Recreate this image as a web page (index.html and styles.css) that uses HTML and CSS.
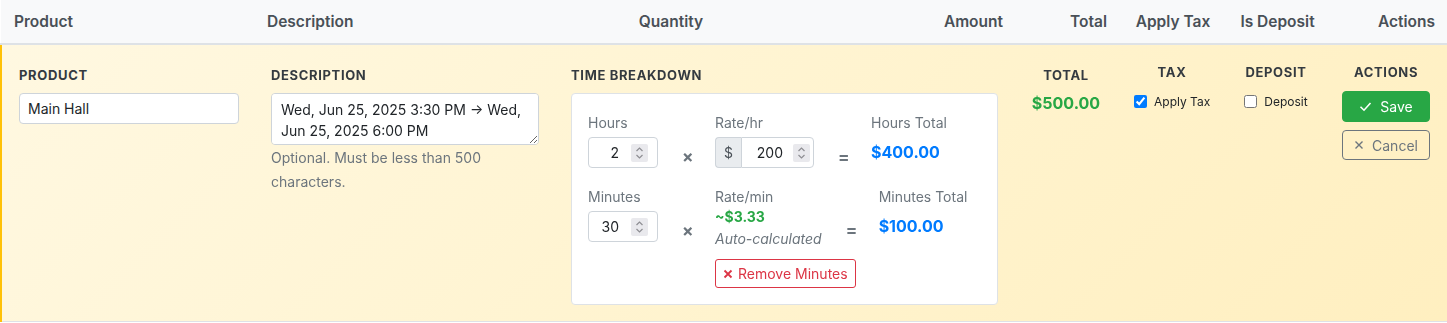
FILE: index.html
```html
<!DOCTYPE html>
<html lang="en">

<head>
    <meta charset="UTF-8">
    <meta name="viewport" content="width=device-width, initial-scale=1.0">
    <title>Line Items</title>
    <link rel="stylesheet" href="styles.css">
</head>

<body>
    <table class="items">
        <colgroup>
            <col class="col-product">
            <col class="col-desc">
            <col class="col-qty">
            <col class="col-amount">
            <col class="col-total">
            <col class="col-tax">
            <col class="col-deposit">
            <col class="col-actions">
        </colgroup>
        <thead>
            <tr>
                <th>Product</th>
                <th>Description</th>
                <th class="center">Quantity</th>
                <th class="right">Amount</th>
                <th class="right">Total</th>
                <th class="center">Apply Tax</th>
                <th class="center">Is Deposit</th>
                <th class="right">Actions</th>
            </tr>
        </thead>
        <tbody>
            <tr class="edit-row">
                <td colspan="8">
                    <div class="edit-grid">
                        <div class="field field-product">
                            <label class="field-label" for="product">Product</label>
                            <input type="text" id="product" class="form-control" value="Main Hall">
                        </div>

                        <div class="field field-desc">
                            <label class="field-label" for="description">Description</label>
                            <textarea id="description" class="form-control" rows="2">Wed, Jun 25, 2025 3:30 PM → Wed, Jun 25, 2025 6:00 PM</textarea>
                            <div class="help-text">Optional. Must be less than 500 characters.</div>
                        </div>

                        <div class="field field-time">
                            <div class="field-label">Time Breakdown</div>
                            <div class="time-card">
                                <div class="calc-row">
                                    <div class="calc-field">
                                        <label class="calc-label" for="hours">Hours</label>
                                        <div class="num-box">
                                            <input type="number" id="hours" value="2">
                                            <span class="spin">
                                                <svg width="17" height="18" viewBox="0 0 17 18"><path d="M5.5 7 8.5 4 11.5 7M5.5 11 8.5 14 11.5 11" fill="none" stroke="#8e8e93" stroke-width="1.2"/></svg>
                                            </span>
                                        </div>
                                    </div>
                                    <div class="op">&times;</div>
                                    <div class="calc-field">
                                        <label class="calc-label" for="rateHr">Rate/hr</label>
                                        <div class="input-group">
                                            <span class="addon">$</span>
                                            <div class="num-box num-box--group">
                                                <input type="number" id="rateHr" value="200">
                                                <span class="spin">
                                                    <svg width="17" height="18" viewBox="0 0 17 18"><path d="M5.5 7 8.5 4 11.5 7M5.5 11 8.5 14 11.5 11" fill="none" stroke="#8e8e93" stroke-width="1.2"/></svg>
                                                </span>
                                            </div>
                                        </div>
                                    </div>
                                    <div class="op">=</div>
                                    <div class="calc-field">
                                        <div class="calc-label">Hours Total</div>
                                        <div class="calc-total">$400.00</div>
                                    </div>
                                </div>

                                <div class="calc-row">
                                    <div class="calc-field">
                                        <label class="calc-label" for="minutes">Minutes</label>
                                        <div class="num-box">
                                            <input type="number" id="minutes" value="30">
                                            <span class="spin">
                                                <svg width="17" height="18" viewBox="0 0 17 18"><path d="M5.5 7 8.5 4 11.5 7M5.5 11 8.5 14 11.5 11" fill="none" stroke="#8e8e93" stroke-width="1.2"/></svg>
                                            </span>
                                        </div>
                                    </div>
                                    <div class="op">&times;</div>
                                    <div class="calc-field">
                                        <div class="calc-label calc-label--flush">Rate/min</div>
                                        <div class="rate-min">~$3.33</div>
                                        <div class="auto-note">Auto-calculated</div>
                                    </div>
                                    <div class="op op--low">=</div>
                                    <div class="calc-field">
                                        <div class="calc-label">Minutes Total</div>
                                        <div class="calc-total">$100.00</div>
                                    </div>
                                </div>

                                <div class="calc-actions">
                                    <button type="button" class="btn-remove">
                                        <svg width="10" height="10" viewBox="0 0 10 10"><path d="M1.5 1.5 8.5 8.5M8.5 1.5 1.5 8.5" stroke="#dc3545" stroke-width="1.8"/></svg>
                                        Remove Minutes
                                    </button>
                                </div>
                            </div>
                        </div>

                        <div class="field field-total">
                            <div class="field-label">Total</div>
                            <div class="line-total">$500.00</div>
                        </div>

                        <div class="field field-tax field--raised">
                            <div class="field-label">Tax</div>
                            <label class="check">
                                <input type="checkbox" checked> Apply Tax
                            </label>
                        </div>

                        <div class="field field-deposit field--raised">
                            <div class="field-label">Deposit</div>
                            <label class="check">
                                <input type="checkbox"> Deposit
                            </label>
                        </div>

                        <div class="field field-actions field--raised">
                            <div class="field-label">Actions</div>
                            <button type="button" class="btn btn-save">
                                <svg width="13" height="13" viewBox="0 0 13 13"><path d="M1.5 6.8 5 10.2 11.5 3" fill="none" stroke="#fff" stroke-width="1.6"/></svg>
                                Save
                            </button>
                            <button type="button" class="btn btn-cancel">
                                <svg width="10" height="10" viewBox="0 0 10 10"><path d="M1.5 1.5 8.5 8.5M8.5 1.5 1.5 8.5" stroke="#6c757d" stroke-width="1.4"/></svg>
                                Cancel
                            </button>
                        </div>
                    </div>
                </td>
            </tr>
        </tbody>
    </table>
</body>

</html>
```

FILE: styles.css
```css
/* General Styles */
body {
    margin: 0;
    font-family: Inter, "Liberation Sans", sans-serif;
    font-size: 14px;
    color: #212529;
    background-color: #fff;
}

/* Table */
.items {
    width: 100%;
    border-collapse: collapse;
    table-layout: fixed;
}

.col-product { width: 253px; }
.col-desc { width: 262px; }
.col-qty { width: 310px; }
.col-amount { width: 190px; }
.col-total { width: 104px; }
.col-tax { width: 106px; }
.col-deposit { width: 103px; }
.col-actions { width: 119px; }

th {
    padding: 10px 13px;
    font-size: 15.5px;
    font-weight: 600;
    line-height: 23px;
    color: #495057;
    text-align: left;
    white-space: nowrap;
    background-color: #f8f9fa;
    border-bottom: 2px solid #dee2e6;
}

th.center {
    text-align: center;
}

th.right {
    text-align: right;
}

/* Editing row */
.edit-row td {
    padding: 20px 15px 16px 17px;
    border-left: 2px solid #ffc107;
    border-right: 2px solid #ffc107;
    border-bottom: 1px solid #dee2e6;
    background: linear-gradient(135deg, #fff8e1 0%, #fff3cd 60%, #ffefc0 100%);
    vertical-align: top;
}

.edit-grid {
    display: flex;
    align-items: flex-start;
    gap: 32px;
}

.field {
    flex-shrink: 0;
}

.field-label {
    display: block;
    margin-bottom: 8px;
    font-size: 13px;
    font-weight: 700;
    line-height: 20px;
    letter-spacing: 0.05em;
    text-transform: uppercase;
    color: #343a40;
}

.field-product { width: 220px; }
.field-desc { width: 268px; }
.field-time { width: 427px; }

.field-total,
.field-tax,
.field-deposit,
.field-actions {
    text-align: center;
}

.field-total { width: 72px; }
.field-tax { width: 76px; }
.field-deposit { width: 68px; }
.field-actions { width: 88px; }

.field--raised {
    margin-top: -3px;
}

.field--raised .field-label {
    margin-bottom: 9px;
}

.form-control {
    display: block;
    width: 100%;
    box-sizing: border-box;
    padding: 5px 8px;
    font-family: inherit;
    font-size: 14px;
    line-height: 19px;
    color: #212529;
    background-color: #fff;
    border: 1px solid #ced4da;
    border-radius: 4px;
}

textarea.form-control {
    height: 52px;
    padding: 5px 9px;
    line-height: 21px;
    resize: vertical;
}

.help-text {
    margin-top: 1px;
    font-size: 14px;
    line-height: 24px;
    color: #6c757d;
}

/* Time breakdown card */
.time-card {
    padding: 18px 16px 16px;
    background-color: #fff;
    border: 1px solid #dee2e6;
    border-radius: 4px;
}

.calc-row {
    display: flex;
    align-items: flex-start;
    gap: 24px;
}

.calc-row + .calc-row {
    margin-top: 18px;
}

.calc-field {
    flex-shrink: 0;
    white-space: nowrap;
}

.calc-label {
    display: block;
    margin-bottom: 4px;
    font-size: 14px;
    line-height: 21px;
    color: #6c757d;
}

.calc-label--flush {
    margin-bottom: 0;
}

.op {
    flex-shrink: 0;
    width: 9px;
    padding-top: 35px;
    font-size: 17px;
    font-weight: 700;
    line-height: 20px;
    text-align: center;
    color: #6c757d;
}

.op--low {
    padding-top: 34px;
}

.calc-actions {
    margin-top: 10px;
    padding-left: 127px;
}

.num-box {
    display: flex;
    align-items: center;
    width: 70px;
    height: 31px;
    box-sizing: border-box;
    padding-right: 9px;
    background-color: #fff;
    border: 1px solid #ced4da;
    border-radius: 4px;
}

.num-box input {
    flex: 1;
    min-width: 0;
    padding: 0 12px 0 0;
    border: none;
    outline: none;
    background: transparent;
    font-family: inherit;
    font-size: 14px;
    text-align: right;
    color: #212529;
    -moz-appearance: textfield;
}

.num-box input::-webkit-inner-spin-button,
.num-box input::-webkit-outer-spin-button {
    -webkit-appearance: none;
    margin: 0;
}

.spin {
    display: block;
    flex-shrink: 0;
    width: 17px;
    height: 18px;
    background-color: #e9e9ed;
    border-radius: 2px;
}

.spin svg {
    display: block;
}

.input-group {
    display: flex;
    width: 99px;
}

.addon {
    width: 26px;
    height: 31px;
    box-sizing: border-box;
    line-height: 29px;
    text-align: center;
    font-size: 14px;
    color: #495057;
    background-color: #e9ecef;
    border: 1px solid #ced4da;
    border-right: none;
    border-radius: 4px 0 0 4px;
}

.num-box--group {
    width: 73px;
    padding-right: 3px;
    border-radius: 0 4px 4px 0;
}

.num-box--group input {
    padding-right: 10px;
}

.calc-total {
    font-size: 16px;
    font-weight: 700;
    line-height: 31px;
    color: #007bff;
}

.rate-min {
    font-size: 14px;
    font-weight: 700;
    line-height: 19px;
    color: #28a745;
}

.auto-note {
    margin-top: 2px;
    font-size: 14px;
    font-style: italic;
    line-height: 21px;
    color: #6c757d;
}

.btn-remove {
    display: flex;
    align-items: center;
    gap: 5px;
    padding: 3px 7px;
    font-family: inherit;
    font-size: 14px;
    line-height: 21px;
    white-space: nowrap;
    color: #dc3545;
    background-color: #fff;
    border: 1px solid #dc3545;
    border-radius: 3px;
    cursor: pointer;
}

/* Right hand columns */
.line-total {
    font-size: 16px;
    font-weight: 700;
    line-height: 20px;
    color: #28a745;
}

.check {
    display: inline-flex;
    align-items: center;
    gap: 7px;
    font-size: 12px;
    line-height: 21px;
    color: #212529;
    white-space: nowrap;
}

.check input {
    width: 13px;
    height: 13px;
    margin: 0;
    accent-color: #007bff;
}

.btn {
    display: flex;
    align-items: center;
    justify-content: center;
    gap: 8px;
    width: 88px;
    box-sizing: border-box;
    font-family: inherit;
    font-size: 14px;
    border-radius: 4px;
    cursor: pointer;
}

.btn-save {
    height: 31px;
    color: #fff;
    background-color: #28a745;
    border: 1px solid #28a745;
}

.btn-cancel {
    height: 30px;
    margin-top: 8px;
    color: #6c757d;
    background-color: transparent;
    border: 1px solid #6c757d;
}
```
